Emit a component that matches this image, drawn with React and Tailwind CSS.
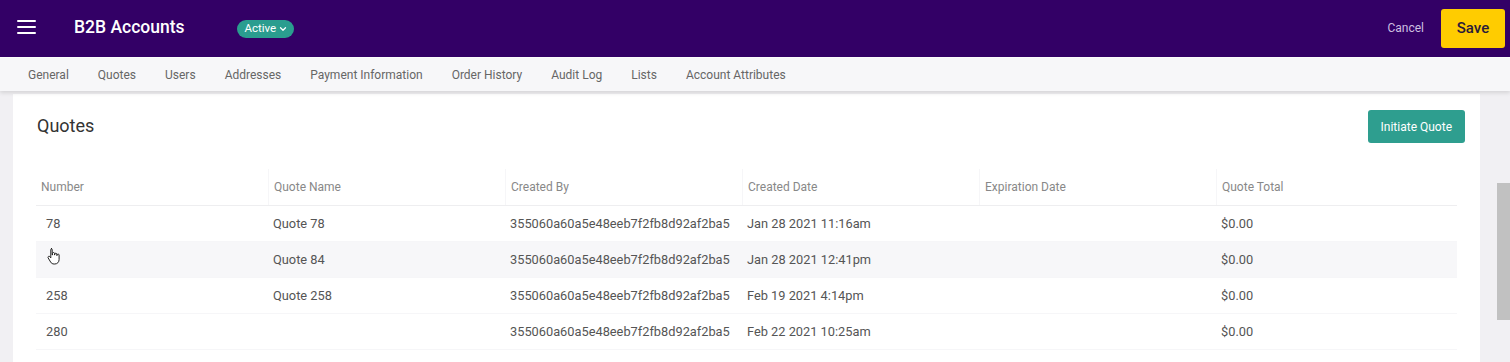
import { ChevronDown } from "lucide-react";

const tabs = ["General", "Quotes", "Users", "Addresses", "Payment Information", "Order History", "Audit Log", "Lists", "Account Attributes"];

const columns = ["Number", "Quote Name", "Created By", "Created Date", "Expiration Date", "Quote Total"];

const rows = [
    { number: "78", name: "Quote 78", by: "355060a60a5e48eeb7f2fb8d92af2ba5", date: "Jan 28 2021 11:16am", total: "$0.00" },
    { number: "", name: "Quote 84", by: "355060a60a5e48eeb7f2fb8d92af2ba5", date: "Jan 28 2021 12:41pm", total: "$0.00", hover: true },
    { number: "258", name: "Quote 258", by: "355060a60a5e48eeb7f2fb8d92af2ba5", date: "Feb 19 2021 4:14pm", total: "$0.00" },
    { number: "280", name: "", by: "355060a60a5e48eeb7f2fb8d92af2ba5", date: "Feb 22 2021 10:25am", total: "$0.00" },
];

// mouse pointer drawn over the hovered row
function HandCursor() {
    return (
        <svg width="14" height="19" viewBox="0 0 14 19" className="absolute left-[1px] top-[-2px]">
            <path
                d="M4 1.5c.7 0 1.2.5 1.2 1.2V8h.3V6.5c0-.6.5-1 1-1s1 .4 1 1V8h.3V7.2c0-.6.5-1 1-1s1 .4 1 1V8.5h.3V8c0-.6.5-1 1-1s1 .4 1 1v4.5c0 2.6-1.8 4.5-4.3 4.5H7c-1.5 0-2.6-.7-3.4-2L1.2 11c-.4-.6-.2-1.3.3-1.6.5-.3 1.1-.1 1.5.4l.8 1.1V2.7c0-.7.5-1.2 1.2-1.2z"
                fill="#fff"
                stroke="#222"
                strokeWidth="1"
                strokeLinejoin="round"
            />
        </svg>
    );
}

export default function App() {
    return (
        <div className="w-[1510px] h-[362px] overflow-hidden flex flex-col bg-[#f1f0f3]" style={{ fontFamily: "Roboto, 'Liberation Sans', sans-serif" }}>
            {/* Top bar */}
            <header className="h-[57px] bg-[#330066] flex items-center shrink-0">
                <div className="w-[17px]" />
                <svg width="19" height="16" viewBox="0 0 19 16" className="mt-[-3px]">
                    <rect x="0" y="1" width="19" height="2" rx="1" fill="#fff" />
                    <rect x="0" y="7" width="19" height="2" rx="1" fill="#fff" />
                    <rect x="0" y="13" width="19" height="2" rx="1" fill="#fff" />
                </svg>
                <h1 className="ml-[38px] text-white text-[17.5px] font-medium mt-[-2px]">B2B Accounts</h1>
                <div className="ml-[52px] h-[18px] pl-[8px] pr-[6px] rounded-full bg-[#2a9d8f] flex items-center gap-[2px] text-white text-[11.5px]">
                    Active
                    <ChevronDown size={10} strokeWidth={3} />
                </div>
                <div className="flex-1" />
                <button className="text-[12px] text-[#cdbfe0] mr-[17px] mt-[-1px]">Cancel</button>
                <button className="w-[64px] h-[39px] rounded-[3px] bg-[#ffcc00] text-[#2a1a3a] text-[15px] font-medium mr-[5px]">Save</button>
            </header>
            <div className="h-[1px] bg-white shrink-0" />

            {/* Tabs */}
            <nav className="h-[33px] bg-[#f7f7f9] shadow-[0_2px_4px_rgba(0,0,0,0.12)] flex items-center gap-[29px] pl-[28px] text-[12px] text-[#666] shrink-0 relative z-10">
                {tabs.map((t) => (
                    <span key={t}>{t}</span>
                ))}
            </nav>

            <div className="flex flex-1 min-h-0">
                <main className="flex-1 pl-[13px] pr-[17px] pt-[3px]">
                    <section className="bg-white h-full px-[23px]">
                        <div className="flex items-start justify-between pt-[16px]">
                            <h2 className="text-[18px] text-[#333] ml-[1px] mt-[2px]">Quotes</h2>
                            <button className="h-[33px] px-[13px] -mr-[8px] rounded-[3px] bg-[#2e9e8f] text-white text-[12px]">Initiate Quote</button>
                        </div>

                        <div className="mt-[26px]">
                            <div className="grid grid-cols-[232px_repeat(5,237px)] h-[37px] items-center border-b border-[#eeeef0] text-[12px] text-[#888]">
                                {columns.map((c, i) => (
                                    <div key={c} className={`h-full flex items-center pl-[5px] ${i === 0 ? "" : "border-l border-[#f6f6f8]"}`}>{c}</div>
                                ))}
                            </div>
                            {rows.map((r, i) => (
                                <div key={i} className={`grid grid-cols-[232px_repeat(5,237px)] h-[36px] items-center border-b border-[#f6f6f8] text-[12.8px] text-[#555] ${r.hover ? "bg-[#f7f7f9]" : ""}`}>
                                    <div className="pl-[10px] relative">
                                        {r.number}
                                        {r.hover && (
                                            <span className="relative inline-block w-[14px] h-[16px]">
                                                <HandCursor />
                                            </span>
                                        )}
                                    </div>
                                    <div className="pl-[5px]">{r.name}</div>
                                    <div className="pl-[5px] whitespace-nowrap">{r.by}</div>
                                    <div className="pl-[5px]">{r.date}</div>
                                    <div className="pl-[5px]"></div>
                                    <div className="pl-[5px]">{r.total}</div>
                                </div>
                            ))}
                        </div>
                    </section>
                </main>

                {/* Scrollbar */}
                <div className="w-[13px] bg-[#f1f0f3] pt-[92px]">
                    <div className="h-[137px] bg-[#c1c1c1]" />
                </div>
            </div>
        </div>
    );
}
